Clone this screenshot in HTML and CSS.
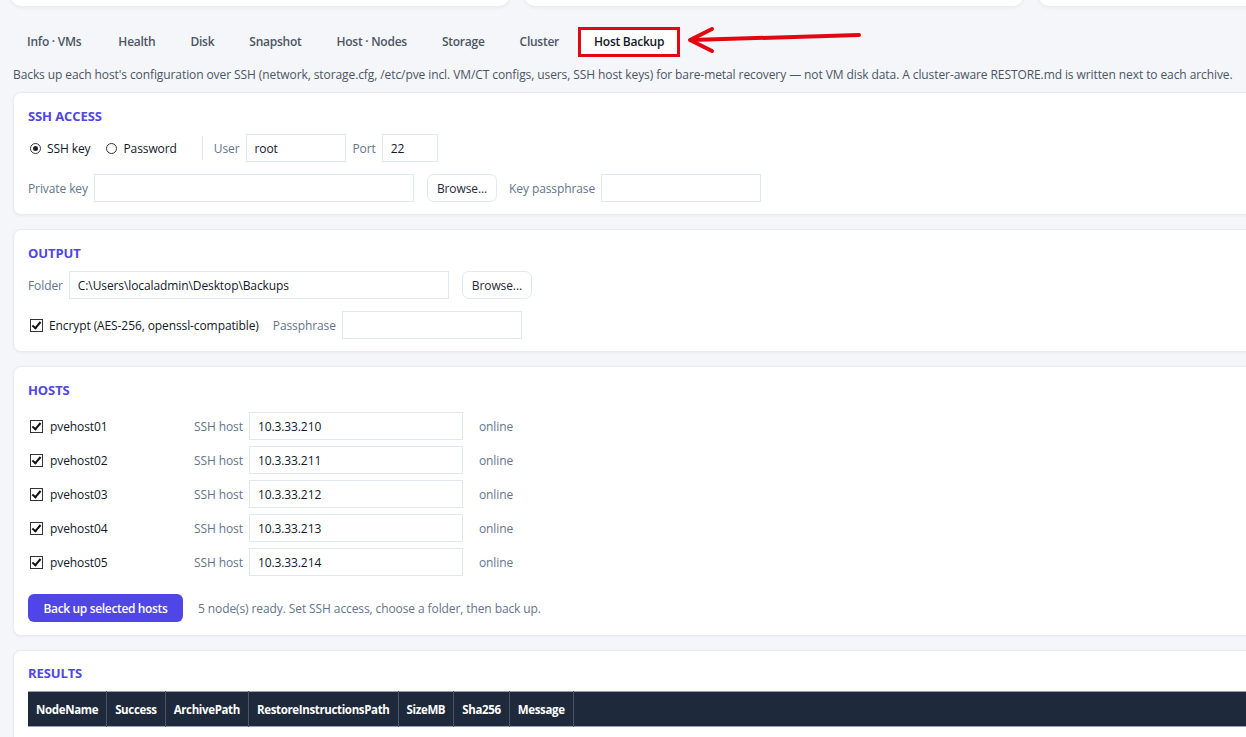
FILE: index.html
```html
<!DOCTYPE html>
<html lang="en">
<head>
    <meta charset="UTF-8">
    <meta name="viewport" content="width=device-width, initial-scale=1.0">
    <title>Host Backup</title>
    <link rel="stylesheet" href="styles.css">
</head>
<body>
    <div class="page">
        <div class="top-cards">
            <div class="top-card"></div>
            <div class="top-card"></div>
            <div class="top-card"></div>
        </div>

        <div class="tabs">
            <div class="tab first">Info · VMs</div>
            <div class="tab">Health</div>
            <div class="tab">Disk</div>
            <div class="tab">Snapshot</div>
            <div class="tab">Host · Nodes</div>
            <div class="tab">Storage</div>
            <div class="tab">Cluster</div>
            <div class="tab active">Host Backup</div>

            <svg class="arrow" width="190" height="36" viewBox="0 0 190 36">
                <path d="M180 12 L12 17" stroke="#e30613" stroke-width="4" stroke-linecap="round" fill="none"/>
                <path d="M33 6 L11 17 L33 28" stroke="#e30613" stroke-width="4" stroke-linecap="round" stroke-linejoin="round" fill="none"/>
            </svg>
        </div>

        <p class="description">Backs up each host's configuration over SSH (network, storage.cfg, /etc/pve incl. VM/CT configs, users, SSH host keys) for bare-metal recovery — not VM disk data. A cluster-aware RESTORE.md is written next to each archive.</p>

        <div class="card">
            <h2 class="card-title">SSH ACCESS</h2>
            <div class="row">
                <label class="check"><input type="radio" name="auth" checked> SSH key</label>
                <label class="check radio-2"><input type="radio" name="auth"> Password</label>
                <span class="divider"></span>
                <span class="label">User</span>
                <input class="field w-user" type="text" value="root">
                <span class="label">Port</span>
                <input class="field w-port" type="text" value="22">
            </div>
            <div class="row">
                <span class="label">Private key</span>
                <input class="field w-key" type="text">
                <button class="browse">Browse...</button>
                <span class="label">Key passphrase</span>
                <input class="field w-pass" type="text">
            </div>
        </div>

        <div class="card">
            <h2 class="card-title">OUTPUT</h2>
            <div class="row">
                <span class="label">Folder</span>
                <input class="field w-folder" type="text" value="C:\Users\localadmin\Desktop\Backups">
                <button class="browse">Browse...</button>
            </div>
            <div class="row">
                <label class="check"><input type="checkbox" checked> Encrypt (AES-256, openssl-compatible)</label>
                <span class="label">Passphrase</span>
                <input class="field w-phrase" type="text">
            </div>
        </div>

        <div class="card hosts-card">
            <h2 class="card-title">HOSTS</h2>
            <div class="hosts" id="hosts"></div>
            <div class="actions">
                <button class="primary">Back up selected hosts</button>
                <span class="status">5 node(s) ready. Set SSH access, choose a folder, then back up.</span>
            </div>
        </div>

        <div class="card results">
            <h2 class="card-title">RESULTS</h2>
            <table class="grid">
                <thead>
                    <tr>
                        <th>NodeName</th>
                        <th>Success</th>
                        <th>ArchivePath</th>
                        <th>RestoreInstructionsPath</th>
                        <th>SizeMB</th>
                        <th>Sha256</th>
                        <th>Message</th>
                        <th class="filler"></th>
                    </tr>
                </thead>
            </table>
        </div>
    </div>

    <script>
        const hosts = [
            { name: "pvehost01", ip: "10.3.33.210" },
            { name: "pvehost02", ip: "10.3.33.211" },
            { name: "pvehost03", ip: "10.3.33.212" },
            { name: "pvehost04", ip: "10.3.33.213" },
            { name: "pvehost05", ip: "10.3.33.214" }
        ];
        const list = document.getElementById("hosts");
        hosts.forEach(h => {
            const row = document.createElement("div");
            row.className = "host-row";
            row.innerHTML =
                '<label class="check host-name"><input type="checkbox" checked> ' + h.name + '</label>' +
                '<span class="label">SSH host</span>' +
                '<input class="field w-host" type="text" value="' + h.ip + '">' +
                '<span class="online">online</span>';
            list.appendChild(row);
        });
    </script>
</body>
</html>
```

FILE: styles.css
```css
body {
    margin: 0;
    background: #f5f6fa;
    font-family: "Open Sans", "Noto Sans", sans-serif;
    font-size: 12px;
    letter-spacing: -0.1px;
    color: #1f2937;
    overflow: hidden;
}
.page {
    width: 1260px;
    padding: 1px 0 0 13px;
}
.top-cards {
    display: flex;
    gap: 16px;
    margin-top: -55px;
    margin-left: -2px;
}
.top-card {
    width: 498px;
    height: 60px;
    flex-shrink: 0;
    background: white;
    border-radius: 10px;
    box-shadow: 0 1px 4px rgba(30, 41, 59, 0.08);
}
.tabs {
    position: relative;
    display: flex;
    align-items: center;
    gap: 7px;
    margin-top: 21px;
    height: 30px;
}
.tab {
    padding: 0 14px;
    color: #4b5563;
    font-weight: 600;
    font-size: 12px;
    letter-spacing: -0.25px;
    line-height: 24px;
}
.tab.first {
    padding-right: 16px;
}
.tab.active {
    background: white;
    color: #111827;
    border: 3px solid #e30613;
    padding: 0 13px;
    margin-left: -2px;
}
.arrow {
    position: absolute;
    left: 666px;
    top: -4px;
}
.description {
    margin: 10px 0 9px;
    color: #4b5563;
    font-size: 12px;
    letter-spacing: -0.09px;
    line-height: 16px;
    white-space: nowrap;
}
.card {
    background: white;
    border: 1px solid #e8ebf1;
    border-radius: 8px;
    box-shadow: 0 1px 3px rgba(30, 41, 59, 0.05);
    padding: 14px 14px 12px 14px;
    margin-bottom: 14px;
}
.card-title {
    margin: 0 0 9px;
    font-size: 13px;
    line-height: 18px;
    font-weight: 700;
    letter-spacing: -0.1px;
    color: #4f46e5;
}
.row {
    display: flex;
    align-items: center;
    height: 28px;
    margin-bottom: 12px;
}
.row:last-child {
    margin-bottom: 0;
}
.label {
    color: #64748b;
    margin-right: 6px;
}
.field {
    height: 28px;
    box-sizing: border-box;
    border: 1px solid #e2e8f0;
    background: white;
    font-family: inherit;
    font-size: 12px;
    letter-spacing: -0.1px;
    color: #111827;
    padding: 0 8px;
    outline: none;
}
.w-user { width: 100px; margin-right: 7px; }
.w-port { width: 56px; }
.w-key { width: 320px; }
.w-pass { width: 160px; }
.w-folder { width: 380px; }
.w-phrase { width: 180px; }
.w-host { width: 214px; margin-right: 16px; }
.browse {
    height: 28px;
    padding: 0 9px;
    margin: 0 12px 0 13px;
    border: 1px solid #e2e8f0;
    border-radius: 7px;
    background: white;
    font-family: inherit;
    font-size: 12px;
    letter-spacing: -0.1px;
    color: #1f2937;
}
.check {
    display: flex;
    align-items: center;
    gap: 6px;
    color: #111827;
    margin-right: 14px;
}
.radio-2 {
    margin-right: 25px;
}
.check input {
    appearance: none;
    margin: 0 0 0 2px;
    width: 13px;
    height: 13px;
    border: 1px solid #333;
    background: white;
    position: relative;
}
.check input[type="radio"] {
    border-radius: 50%;
    width: 11px;
    height: 11px;
}
.check input[type="radio"]:checked::after {
    content: "";
    position: absolute;
    left: 2px;
    top: 2px;
    width: 5px;
    height: 5px;
    border-radius: 50%;
    background: #222;
}
.check input[type="checkbox"]:checked::after {
    content: "";
    position: absolute;
    left: 3px;
    top: 0px;
    width: 3px;
    height: 7px;
    border: solid #111;
    border-width: 0 2px 2px 0;
    transform: rotate(40deg);
}
.divider {
    width: 1px;
    height: 24px;
    background: #e5e7eb;
    margin-right: 11px;
}
.hosts {
    display: flex;
    flex-direction: column;
    gap: 6px;
    margin-top: 13px;
}
.host-row {
    display: flex;
    align-items: center;
    height: 28px;
}
.host-name {
    width: 166px;
    gap: 7px;
    margin-right: 0;
}
.online {
    color: #64748b;
}
.actions {
    display: flex;
    align-items: center;
    margin-top: 18px;
}
.hosts-card {
    padding-bottom: 13px;
}
.primary {
    height: 28px;
    width: 155px;
    border: none;
    border-radius: 6px;
    background: #4f46e5;
    color: white;
    font-family: inherit;
    font-size: 12px;
    font-weight: 600;
    letter-spacing: -0.35px;
    margin-right: 15px;
}
.status {
    color: #64748b;
}
.results {
    padding-top: 13px;
    padding-bottom: 40px;
}
.grid {
    width: 100%;
    border-collapse: collapse;
    background: #1e293b;
    border-top: 1px solid #94a3b8;
    border-bottom: 1px solid #94a3b8;
}
.grid th {
    height: 34px;
    padding: 0 8px;
    color: white;
    font-size: 11.5px;
    font-weight: 700;
    letter-spacing: -0.35px;
    text-align: left;
    border-right: 1px solid #4b5563;
    white-space: nowrap;
}
.grid th.filler {
    width: 100%;
    border-right: none;
}
```
